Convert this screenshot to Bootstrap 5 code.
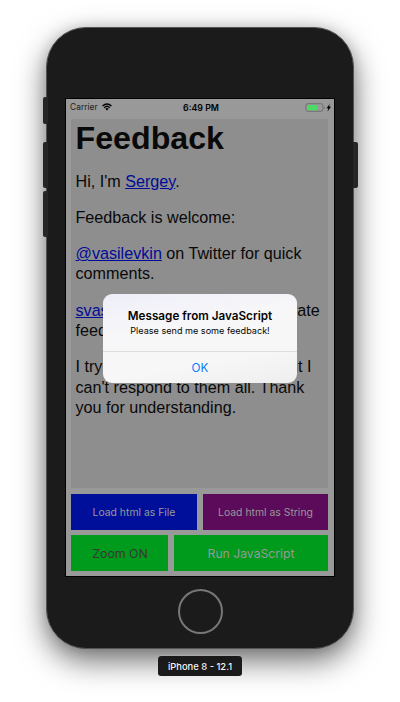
<!DOCTYPE html>
<html lang="en">
<head>
<meta charset="utf-8">
<meta name="viewport" content="width=device-width, initial-scale=1">
<title>Feedback</title>
<link href="https://cdn.jsdelivr.net/npm/bootstrap@5.3.0/dist/css/bootstrap.min.css" rel="stylesheet">
<style>
body{width:400px;height:702px;font-family:Inter,sans-serif;background:#fff;-webkit-font-smoothing:antialiased}
.phone{width:308px;height:622px;margin-top:27px;padding:70px 18px 0;border:1px solid #555;border-radius:40px;background:#1b1b1b;box-shadow:0 12px 30px rgba(0,0,0,.56),0 0 14px rgba(0,0,0,.12)}
.side-key{left:-4.5px;width:5px;background:#262626;border-radius:2px 0 0 2px}
.key-mute{top:69px;height:27px}
.key-up{top:114px;height:46px}
.key-down{top:163px;height:46px}
.key-power{left:auto;right:-4.5px;top:114px;height:46px;border-radius:0 2px 2px 0}
.screen{width:270px;height:479px;border:1px solid #000;background:#999;padding:0 6px 0 5px}
.status{height:20px;font-size:8.4px;line-height:17px;color:#000}
.status .carrier{left:-1px;letter-spacing:.03px;color:#222}
.status .clock{font-size:8.8px;padding-left:3px}
.wifi{width:10px;height:8px;margin:4px 0 0 3px}
.battery{width:26px;height:9px;margin:4px -2.5px 0 0}
.webview{height:369px;background:#8e8e8e;color:#090909;font-family:"Liberation Sans",Arial,sans-serif;font-size:16.15px;line-height:20.2px;padding:1px 0 0 4.5px;white-space:nowrap}
.webview h1{font-size:32.2px;line-height:36px;font-weight:700;margin:0 0 14.5px}
.webview p{margin:0 0 16.2px}
.webview a{color:#000b98}
.pad-row{margin-top:5.500px}
.pad-btn{height:36px;border:0;border-radius:0;padding:0;line-height:37px;color:#999}
.pad-btn:hover{color:#999}
.btn-file{width:126px;background:#000f99!important;font-size:10.4px}
.btn-string{width:125px;background:#5b0b5a!important;font-size:10.4px}
.btn-zoom{width:97px;background:#009b1d!important;color:#373737;font-size:12.3px;padding-left:1px}
.btn-run{width:154px;background:#009b1d!important;font-size:12.2px}
.alert-box{left:37px;top:194.5px;width:194px;height:89px;border-radius:9px;background:linear-gradient(170deg,#eeeef9 0,#f7f7f9 35%,#f7f7f7 70%,#eeeeef 100%);color:#050505}
.alert-title{font-size:11.7px;line-height:16px;font-weight:600;padding-top:14px}
.alert-text{font-size:9.1px;line-height:12px;padding-top:1px;height:27px}
.alert-ok{height:32px;border:0;border-top:1px solid #dedee0;border-radius:0;color:#087cff;font-size:11.7px;line-height:32px;padding:0}
.home-key{width:45px;height:45px;border:2px solid #777;margin-top:12px}
.device-name{width:84px;height:20px;margin-top:7px;border-radius:3px;background:#1a1a1a;color:#f4f4f4;font-size:9.4px;font-weight:500;line-height:22px;box-shadow:0 0 1px #fff}
</style>
</head>
<body class="d-flex flex-column align-items-center overflow-hidden">
<main class="phone position-relative flex-shrink-0">
  <span class="side-key key-mute position-absolute"></span>
  <span class="side-key key-up position-absolute"></span>
  <span class="side-key key-down position-absolute"></span>
  <span class="side-key key-power position-absolute"></span>
  <section class="screen position-relative">
    <div class="status d-flex justify-content-between">
      <div class="d-flex col"><span class="carrier position-relative">Carrier</span>
        <svg class="wifi" viewBox="0 0 20 16"><g fill="none" stroke="#000" stroke-width="2.8"><path d="M1 6Q10-2 19 6M4.4 9.3Q10 4 15.6 9.3"/></g><path d="M6.7 11.7Q10 8.7 13.3 11.7L10 15Z"/></svg>
      </div>
      <strong class="clock fw-semibold">6:49 PM</strong>
      <div class="d-flex justify-content-end col">
        <svg class="battery" viewBox="0 0 26 9"><rect x=".9" y=".7" width="17" height="7.6" rx="2" fill="none" stroke="#666" stroke-width=".8"/><rect x="2" y="1.900" width="10.500" height="5.300" rx=".6" fill="#4cd964"/><path d="M19.200 3.100q1.400 1.400 0 2.800z" fill="#666"/><path d="M24.600.9 21.600 5.200h1.700l-.8 3.200L26 3.800H24.200z"/></svg>
      </div>
    </div>
    <article class="webview">
      <h1>Feedback</h1>
      <p>Hi, I'm <a href="#">Sergey</a>.</p>
      <p>Feedback is welcome:</p>
      <p><a href="#">@vasilevkin</a> on Twitter for quick<br>comments.</p>
      <p><a href="#">svasilevkin@gmail.com</a> for private<br>feedback.</p>
      <p>I try to answer all messages but I<br>can't respond to them all. Thank<br>you for understanding.</p>
    </article>
    <div class="pad-row d-flex justify-content-between">
      <button class="btn pad-btn btn-file">Load html as File</button>
      <button class="btn pad-btn btn-string">Load html as String</button>
    </div>
    <div class="pad-row d-flex justify-content-between">
      <button class="btn pad-btn btn-zoom">Zoom ON</button>
      <button class="btn pad-btn btn-run">Run JavaScript</button>
    </div>
    <div class="alert-box position-absolute text-center overflow-hidden" role="alertdialog">
      <div class="alert-title">Message from JavaScript</div>
      <div class="alert-text">Please send me some feedback!</div>
      <button class="btn alert-ok w-100 d-block">OK</button>
    </div>
  </section>
  <div class="home-key rounded-circle mx-auto"></div>
</main>
<div class="device-name text-center position-relative flex-shrink-0">iPhone 8 - 12.1</div>
<script src="https://cdn.jsdelivr.net/npm/bootstrap@5.3.0/dist/js/bootstrap.bundle.min.js"></script>
</body>
</html>
